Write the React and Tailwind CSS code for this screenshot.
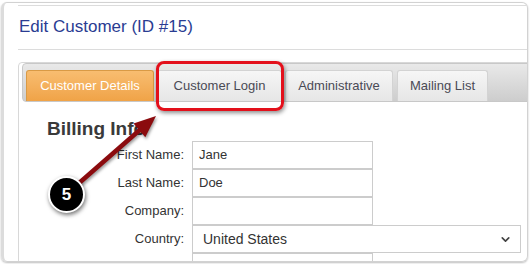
import { ChevronDown } from 'lucide-react';

const font = { fontFamily: '"Liberation Sans", Arial, sans-serif' };

const Tab = ({ label, width, active }) => (
  <div
    className={
      active
        ? `h-[31px] ${width} flex items-center justify-center rounded-t-[3px] border border-b-0 border-[#d99a45] bg-gradient-to-b from-[#f8bd70] to-[#f0a347] text-white text-[13px]`
        : `h-[31px] ${width} flex items-center justify-center rounded-t-[3px] border border-b-0 border-[#d3d3d3] bg-gradient-to-b from-[#f6f6f6] to-[#e6e6e6] text-[#4a4a55] text-[13px]`
    }
  >
    {label}
  </div>
);

const Row = ({ label, children }) => (
  <div className="flex items-center h-[28px]">
    <div className="w-[162px] text-right text-[13px] text-[#333]">{label}</div>
    <div className="ml-[8px]">{children}</div>
  </div>
);

const Input = ({ value }) => (
  <div className="w-[181px] h-[28px] border border-[#cccccc] bg-white pl-[6px] flex items-center text-[13px] text-[#333]">
    {value}
  </div>
);

export default function App() {
  return (
    <div className="relative w-[530px] h-[264px] bg-white overflow-hidden" style={font}>
      {/* screenshot frame */}
      <div className="ml-[1px] mt-[2px] w-[527px] h-[260px] rounded-[6px] border border-[#d2d2d2] border-l-[3px] border-l-[#dcdcdc] shadow-[0_1px_2px_rgba(0,0,0,0.25)] overflow-hidden pl-[14px] pt-[2px]">
        <div className="border-t border-[#dcdcdc] w-[540px]">
          <div className="h-[44px] border-b border-[#dcdcdc] pt-[11px] pl-[1px] text-[17px] leading-[20px] text-[#2a3c92]">
            Edit Customer (ID #15)
          </div>

          {/* tabs container */}
          <div className="mt-[12px] border border-[#d8d8d8] rounded-tl-[4px] px-[3px] h-[250px]">
            <div className="h-[39px] border border-[#c8c8c8] rounded-[4px] bg-gradient-to-b from-[#e9e9e9] to-[#cdcdcd] flex items-end pl-[3px]">
              <Tab label="Customer Details" width="w-[128px]" active />
              <div className="w-[3px]" />
              <Tab label="Customer Login" width="w-[125px]" />
              <div className="w-[3px]" />
              <Tab label="Administrative" width="w-[108px]" />
              <div className="w-[4px]" />
              <Tab label="Mailing List" width="w-[91px]" />
            </div>

            <div className="pt-[16px]">
              <h2 className="pl-[25px] text-[19px] leading-[22px] font-bold text-[#3a3a3a]">Billing Info</h2>
              <div className="mt-[1px]">
                <Row label="First Name:">
                  <Input value="Jane" />
                </Row>
                <Row label="Last Name:">
                  <Input value="Doe" />
                </Row>
                <Row label="Company:">
                  <Input value="" />
                </Row>
                <Row label="Country:">
                  <div className="w-[329px] h-[28px] border border-[#cccccc] bg-white pl-[10px] pr-[8px] flex items-center justify-between text-[14px] text-[#333]">
                    <span>United States</span>
                    <ChevronDown size={13} strokeWidth={3} color="#444" />
                  </div>
                </Row>
                <Row label="Address Line 1:">
                  <Input value="" />
                </Row>
              </div>
            </div>
          </div>
        </div>
      </div>

      {/* annotation: highlight */}
      <div className="absolute left-[156px] top-[61px] w-[128px] h-[50px] rounded-[8px] border-[3px] border-[#e3101b] shadow-[1px_2px_4px_rgba(0,0,0,0.45)]" />

      {/* annotation: arrow */}
      <svg
        className="absolute left-0 top-0 drop-shadow-[1px_2px_1.5px_rgba(0,0,0,0.4)]"
        width="530"
        height="264"
        viewBox="0 0 530 264"
      >
        <line x1="78" y1="184" x2="142" y2="128" stroke="#8b0b0e" strokeWidth="4.5" strokeLinecap="round" />
        <polygon points="156,116 145.3,137.2 133.5,123.6" fill="#8b0b0e" />
      </svg>

      {/* annotation: step badge */}
      <div className="absolute left-[48px] top-[176px] w-[37px] h-[37px] rounded-full bg-black border-2 border-white shadow-[1px_2px_4px_rgba(0,0,0,0.55)] flex items-center justify-center text-white font-bold text-[17px]">
        5
      </div>
    </div>
  );
}
